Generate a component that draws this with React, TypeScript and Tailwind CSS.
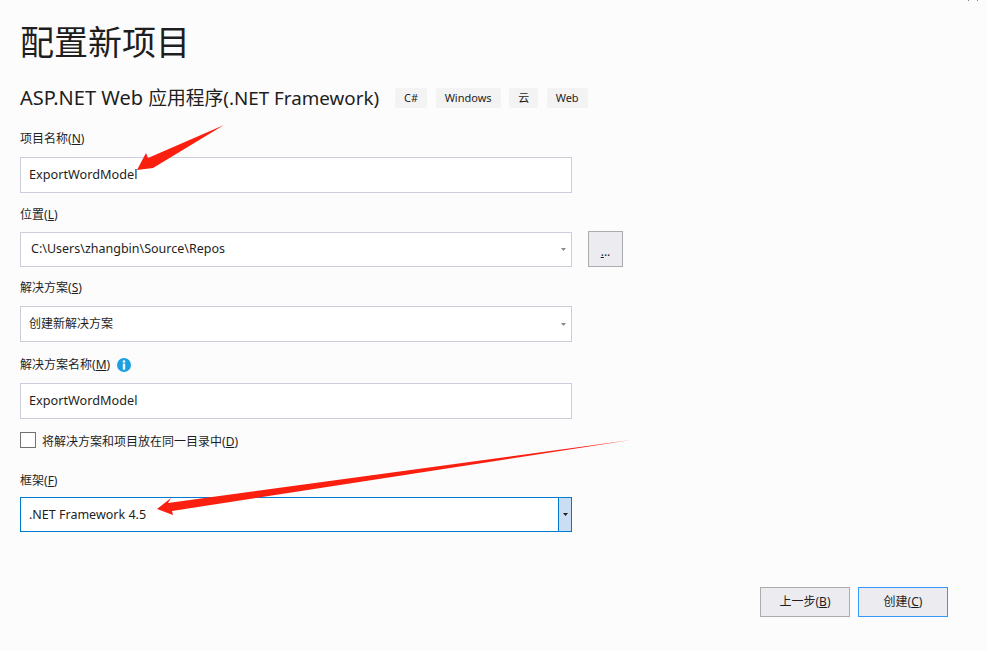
const FONT = "font-['Noto_Sans','Noto_Sans_CJK_SC',sans-serif]";

const TAGS = ["C#", "Windows", "云", "Web"];

const Label = ({ text, hotkey, className = "" }: { text: string; hotkey: string; className?: string }) => (
  <div className={`h-[18px] text-[12px] leading-[18px] text-[#1e1e1e] ${className}`}>
    {text}(<span className="underline">{hotkey}</span>)
  </div>
);

const Caret = ({ color = "#8a8a8a" }: { color?: string }) => (
  <svg width="5" height="3" viewBox="0 0 5 3">
    <path d="M0 0h5L2.5 3z" fill={color} />
  </svg>
);

const Field = ({ children, select, className = "h-[36px]" }: { children: React.ReactNode; select?: boolean; className?: string }) => (
  <div className={`flex w-[552px] items-center justify-between border border-[#cccedb] bg-white pl-[8px] pr-[1px] text-[#1e1e1e] ${className}`}>
    {children}
    {select && (
      <span className="flex w-[13px] justify-center">
        <Caret />
      </span>
    )}
  </div>
);

export default function App() {
  return (
    <div className={`relative h-[651px] w-[987px] overflow-hidden bg-[#fcfcfd] pl-[20px] ${FONT}`}>
      <h1 className="pt-[19px] text-[34px] font-normal leading-[46px] text-[#1e1e1e]">配置新项目</h1>

      <div className="mt-[20px] flex h-[26px] items-center">
        <h2 className="font-normal leading-[26px] text-[#1e1e1e]">
          <span className="text-[20px]">ASP.NET Web </span>
          <span className="text-[18.8px]">应用程序(.NET Framework)</span>
        </h2>
        <div className="ml-[16px] flex gap-[8.5px]">
          {TAGS.map((tag) => (
            <span key={tag} className="flex h-[20px] items-center rounded-[3px] bg-[#f3f3f3] px-[9px] text-[11px] text-[#1e1e1e]">
              {tag}
            </span>
          ))}
        </div>
      </div>

      <Label text="项目名称" hotkey="N" className="mt-[19px]" />
      <div className="mt-[9px]">
        <Field>
          <span className="text-[12.7px]">ExportWordModel</span>
        </Field>
      </div>

      <Label text="位置" hotkey="L" className="mt-[13px]" />
      <div className="mt-[7px] flex gap-[16px]">
        <Field select className="mt-[1px] h-[35px]">
          <span className="pl-[2px] text-[12.5px]">C:\Users\zhangbin\Source\Repos</span>
        </Field>
        <button className="flex h-[36px] w-[35px] items-center justify-center border border-[#acacac] bg-[#ececf0] pt-[5px] text-[12px] leading-none text-[#1e1e1e]">
          <span className="underline">.</span>..
        </button>
      </div>

      <Label text="解决方案" hotkey="S" className="mt-[12px]" />
      <div className="mt-[9px]">
        <Field select>
          <span className="text-[12px]">创建新解决方案</span>
        </Field>
      </div>

      <div className="mt-[14px] flex h-[18px] items-center gap-[7px]">
        <Label text="解决方案名称" hotkey="M" />
        <svg width="14" height="14" viewBox="0 0 14 14">
          <circle cx="7" cy="7" r="7" fill="#1ba1e2" />
          <rect x="5.8" y="2.4" width="2.4" height="2.2" fill="#fff" />
          <rect x="5.8" y="5.6" width="2.4" height="6" fill="#fff" />
        </svg>
      </div>
      <div className="mt-[9px]">
        <Field>
          <span className="text-[12.7px]">ExportWordModel</span>
        </Field>
      </div>

      <div className="mt-[12px] flex h-[17px] items-center gap-[6px]">
        <div className="h-[16px] w-[16px] border border-[#717171] bg-white" />
        <Label text="将解决方案和项目放在同一目录中" hotkey="D" className="mt-[4px]" />
      </div>

      <Label text="框架" hotkey="F" className="mt-[24px]" />
      <div className="mt-[7px] flex h-[35px] w-[552px] items-center border border-[#007acc] bg-white text-[#1e1e1e]">
        <span className="flex-1 pl-[8px] pt-[2px] text-[12.5px]">.NET Framework 4.5</span>
        <span className="flex h-full w-[13px] items-center justify-center border-l border-[#007acc] bg-[#c9def5]">
          <Caret color="#1e1e1e" />
        </span>
      </div>

      <div className="mt-[55px] flex justify-end gap-[8px] pr-[39px]">
        <button className="flex h-[30px] w-[90px] items-center justify-center border border-[#acacac] bg-[#ececf0] text-[12px] text-[#1e1e1e]">
          上一步(<span className="underline">B</span>)
        </button>
        <button className="flex h-[30px] w-[90px] items-center justify-center border border-[#3399ff] bg-[#ececf0] text-[12px] text-[#1e1e1e]">
          创建(<span className="underline">C</span>)
        </button>
      </div>

      {/* annotation arrows and stray marks drawn over the dialog */}
      <svg className="pointer-events-none absolute left-0 top-0" width="987" height="651" viewBox="0 0 987 651">
        <rect x="968" y="0" width="1" height="1" fill="#8a8a8a" />
        <rect x="977" y="0" width="1" height="1" fill="#8a8a8a" />
        <path d="M224 125L148 158L146 153L137 170L153 168L158 165z" fill="#fb1f10" />
        <path d="M631 440L168 503L171 498L157 509L173 515L172 511z" fill="#fb1f10" />
      </svg>
    </div>
  );
}
